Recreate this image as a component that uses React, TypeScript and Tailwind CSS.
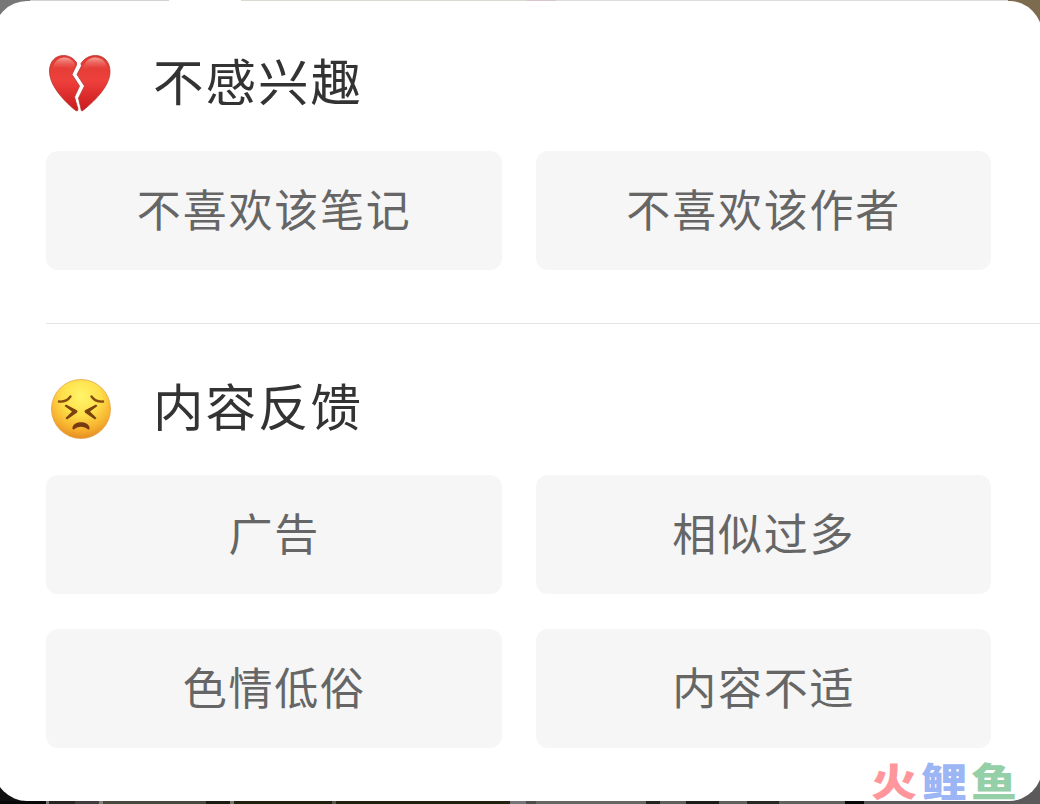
const DISLIKE_OPTIONS = ["不喜欢该笔记", "不喜欢该作者"];

const FEEDBACK_OPTIONS = ["广告", "相似过多", "色情低俗", "内容不适"];

/* slivers of the dimmed page behind the sheet */
const TOP_STRIP = [
  "w-[30px] bg-[#777777]",
  "w-[139px] bg-[#d2d2d2]",
  "w-[72px] bg-[#ffffff]",
  "w-[286px] bg-[#d9d9d0]",
  "w-[29px] bg-[#d9c5c8]",
  "w-[452px] bg-[#dcdcda]",
  "flex-1 bg-[#7d6b50]",
];

const BOTTOM_STRIP = [
  "w-[46px] bg-[#080808]",
  "w-[3px] bg-[#777777]",
  "w-[26px] bg-[#292524]",
  "w-[24px] bg-[#423c40]",
  "w-[4px] bg-[#85827e]",
  "w-[103px] bg-[#48483c]",
  "w-[24px] bg-[#1c1c13]",
  "w-[4px] bg-[#777770]",
  "w-[98px] bg-[#21200f]",
  "w-[4px] bg-[#55544b]",
  "w-[174px] bg-[#23200f]",
  "w-[16px] bg-[#77757a]",
  "w-[10px] bg-[#514c4c]",
  "w-[110px] bg-[#686663]",
  "w-[14px] bg-[#242424]",
  "w-[26px] bg-[#605e5c]",
  "w-[33px] bg-[#1c1c1b]",
  "w-[28px] bg-[#62605e]",
  "w-[32px] bg-[#292827]",
  "w-[66px] bg-[#62605e]",
  "w-[19px] bg-[#080808]",
  "flex-1 bg-[#5b5959]",
];

function BrokenHeart() {
  return (
    <svg width="64" height="60" viewBox="0 0 64 60">
      <defs>
        <linearGradient id="heart" x1="0" y1="0" x2="0" y2="1">
          <stop offset="0" stopColor="#dd3a33" />
          <stop offset="0.45" stopColor="#ee403b" />
          <stop offset="1" stopColor="#c9191d" />
        </linearGradient>
        <linearGradient id="shine" x1="0" y1="0" x2="0" y2="1">
          <stop offset="0" stopColor="#ffc4bb" stopOpacity="0.75" />
          <stop offset="1" stopColor="#f4635c" stopOpacity="0" />
        </linearGradient>
      </defs>
      <path
        d="M28.500 8.500C25 3.500 20 1.500 15.500 1.500C7 1.500 1.500 8 1.500 17C1.500 31 14 45 27 56C29 57.500 30 57 30 55L26.500 43L31.500 32L24 20.500L28.500 11Z"
        fill="url(#heart)"
        stroke="#b93330"
        strokeWidth="0.8"
      />
      <path
        d="M33 9.500C36.500 4 42 1.500 47.500 1.500C56.500 1.500 62 8.500 62 17.500C62 31 49 45 35.500 56C34 57.500 33 57 33 55L30.500 44L36.500 32L29 20.500L33.500 12Z"
        fill="url(#heart)"
        stroke="#b93330"
        strokeWidth="0.8"
      />
      <path d="M5 14C6 7 12 3 17 3.500C22 4 26 7 27 11L24 16C18 13 9 12 5 14Z" fill="url(#shine)" />
      <path d="M36 11C39 5 44 3 48 3.500C55 4 59 9 59 15C52 12 42 12 34 16Z" fill="url(#shine)" />
    </svg>
  );
}

function PerseveringFace() {
  return (
    <svg width="62" height="62" viewBox="0 0 62 62">
      <defs>
        <radialGradient id="face" cx="0.5" cy="0.28" r="0.72">
          <stop offset="0" stopColor="#fff56a" />
          <stop offset="0.45" stopColor="#ffdf4a" />
          <stop offset="0.8" stopColor="#f6b02e" />
          <stop offset="1" stopColor="#e58d24" />
        </radialGradient>
      </defs>
      <circle cx="31" cy="31" r="29.500" fill="url(#face)" stroke="#e3a347" strokeWidth="0.8" />
      <g fill="none" stroke="#854a10" strokeWidth="2.400" strokeLinecap="round">
        <path d="M9 23.500C14 24 18 22 20.500 18.500" />
        <path d="M41.500 18.500C44 22 48 24 53 23.500" />
      </g>
      <path d="M16 26.500L26.500 32Q28.500 33.500 26.500 35L17 41.500L15.500 40L22 33.500L14.500 28Z" fill="#7b420d" />
      <path d="M46 26.500L35.500 32Q33.500 33.500 35.500 35L45 41.500L46.500 40L40 33.500L47.500 28Z" fill="#7b420d" />
      <path d="M22.500 49.500C24 42.500 38 42.500 39.500 49.500Q40 52.500 37.500 51C33 48 29 48 24.500 51Q22 52.500 22.500 49.500Z" fill="#773b13" />
    </svg>
  );
}

function Option({ label }: { label: string }) {
  return (
    <button
      type="button"
      className="h-[119px] rounded-xl bg-[#f6f6f6] pb-[6px] pl-px text-[44px] leading-none tracking-[1.800px] text-[#666666]"
    >
      {label}
    </button>
  );
}

export default function App() {
  return (
    <div className="relative flex h-[804px] w-[1040px] flex-col overflow-hidden bg-white font-['Noto_Sans_CJK_SC',sans-serif]">
      {/* BACKDROP */}
      <div className="absolute inset-0 flex flex-col">
        <div className="flex h-px">
          {TOP_STRIP.map((cls, i) => (
            <div key={i} className={cls} />
          ))}
        </div>
        <div className="flex flex-1 justify-between">
          <div className="flex w-10 flex-col justify-between">
            <div className="h-10 bg-[#777777]" />
            <div className="h-10 bg-[#111111]" />
          </div>
          <div className="flex w-10 flex-col justify-between">
            <div className="h-10 bg-[#7d6b50]" />
            <div className="h-10 bg-[#5b5959]" />
          </div>
        </div>
        <div className="flex h-[3px]">
          {BOTTOM_STRIP.map((cls, i) => (
            <div key={i} className={cls} />
          ))}
        </div>
      </div>

      {/* SHEET */}
      <div className="relative -mr-[2px] -ml-[6px] mt-px h-[800px] shrink-0 rounded-[33px] bg-white pr-[2px] pl-[52px]">
        {/* NOT INTERESTED */}
        <section className="pt-[47px]">
          <div className="flex h-[70px] items-center">
            <div className="ml-[2px] w-[105px] pt-[2px]">
              <BrokenHeart />
            </div>
            <h2 className="pb-[7px] text-[50.500px] leading-none tracking-[2px] text-[#333333]">不感兴趣</h2>
          </div>
          <div className="mt-[33px] mr-[49px] grid grid-cols-2 gap-[34px]">
            {DISLIKE_OPTIONS.map((label) => (
              <Option key={label} label={label} />
            ))}
          </div>
        </section>

        <div className="mt-[53px] h-px bg-[#e4e4e4]" />

        {/* CONTENT FEEDBACK */}
        <section className="pt-[49px]">
          <div className="flex h-[70px] items-center">
            <div className="ml-[4px] w-[103px] pt-[2px]">
              <PerseveringFace />
            </div>
            <h2 className="pb-[7px] text-[50.500px] leading-none tracking-[2px] text-[#333333]">内容反馈</h2>
          </div>
          <div className="mt-[32px] mr-[49px] grid grid-cols-2 gap-x-[34px] gap-y-[35px]">
            {FEEDBACK_OPTIONS.map((label) => (
              <Option key={label} label={label} />
            ))}
          </div>
        </section>
      </div>

      {/* WATERMARK */}
      <div className="absolute top-[756px] left-[871px] flex origin-center scale-y-[0.84] gap-[4px] text-[46px] leading-[46px] font-black">
        <span className="text-[#ff969b]">火</span>
        <span className="text-[#9bb5f5]">鲤</span>
        <span className="text-[#94cfa8]">鱼</span>
      </div>
    </div>
  );
}
